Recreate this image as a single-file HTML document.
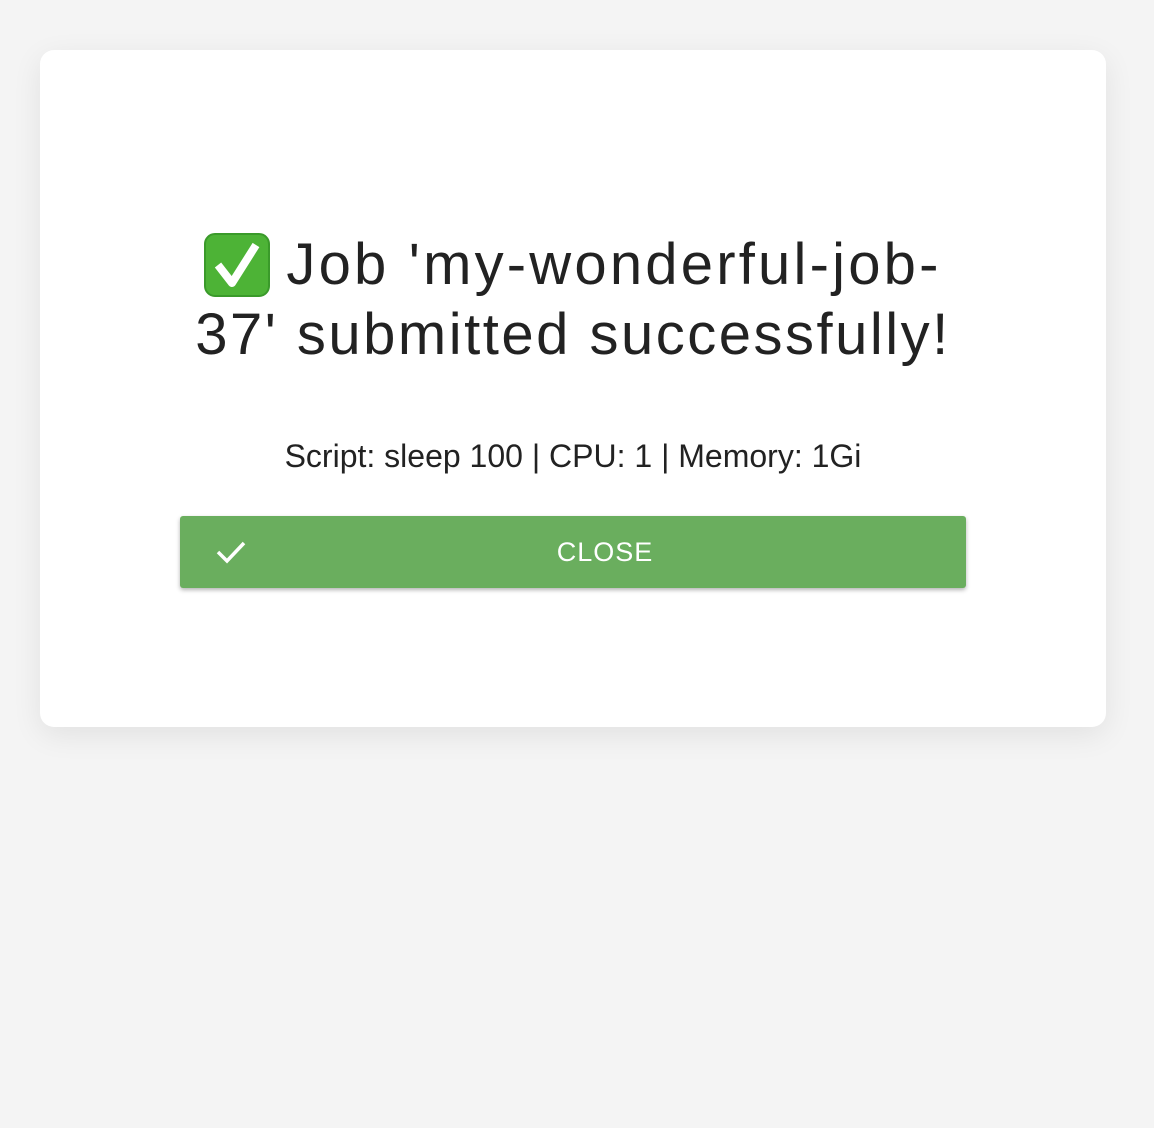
<!DOCTYPE html>
<html><head><meta charset="utf-8"><style>
html,body{margin:0;padding:0;background:#f4f4f4;width:1154px;height:1128px;overflow:hidden;font-family:"Liberation Sans",sans-serif;}
.card{position:absolute;left:40px;top:50px;width:1066px;height:677px;background:#fff;border-radius:14px;box-shadow:0 8px 30px rgba(0,0,0,0.08);}
.title{position:absolute;left:60px;width:946px;top:180px;text-align:center;font-size:58px;line-height:70px;color:#222;letter-spacing:2.5px;white-space:nowrap;}
.l1{letter-spacing:3.2px;}
.emo{display:inline-block;width:66px;height:64px;vertical-align:-13px;margin-right:16px;}
.sub{position:absolute;left:0;width:1066px;top:388px;text-align:center;font-size:32px;color:#222;}
.btn{position:absolute;left:140px;top:466px;width:786px;height:72px;background:#6aae5e;border-radius:3px;box-shadow:0 2px 4px rgba(0,0,0,0.3);}
.btn span{position:absolute;left:0;width:850px;top:21px;text-align:center;color:#fff;font-size:27px;letter-spacing:1px;}
.btn svg{position:absolute;left:36px;top:22px;}
</style></head><body>
<div class="card">
<div class="title"><span class="l1"><svg class="emo" viewBox="0 0 66 64"><rect x="1" y="1" width="64" height="62" rx="10" fill="#4db336" stroke="#3a9a2a" stroke-width="2"/><path d="M14 32 L28 50 L52 12" fill="none" stroke="#fff" stroke-width="8" stroke-linejoin="round"/></svg>Job 'my-wonderful-job-</span><br>37' submitted successfully!</div>
<div class="sub">Script: sleep 100 | CPU: 1 | Memory: 1Gi</div>
<div class="btn"><svg width="30" height="28" viewBox="0 0 30 28"><path d="M2 14 L11 23 L28 5" fill="none" stroke="#fff" stroke-width="3.5"/></svg><span>CLOSE</span></div>
</div>
</body></html>
